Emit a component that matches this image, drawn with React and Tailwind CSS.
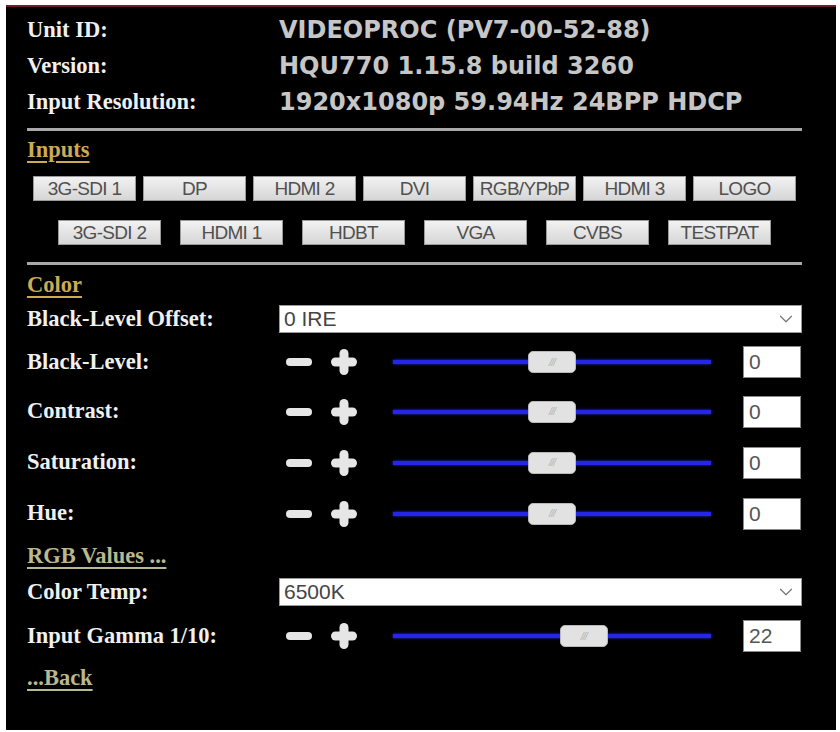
import { ChevronDown } from "lucide-react"

const serif = { fontFamily: '"Liberation Serif", "Times New Roman", serif' }

const info = [
  ["Unit ID:", "VIDEOPROC (PV7-00-52-88)"],
  ["Version:", "HQU770 1.15.8 build 3260"],
  ["Input Resolution:", "1920x1080p 59.94Hz 24BPP HDCP"],
]

const row1 = ["3G-SDI 1", "DP", "HDMI 2", "DVI", "RGB/YPbP", "HDMI 3", "LOGO"]
const row2 = ["3G-SDI 2", "HDMI 1", "HDBT", "VGA", "CVBS", "TESTPAT"]

const InputButton = ({ label }) => (
  <button className="w-[103px] h-[25px] bg-gradient-to-b from-[#f2f2f2] to-[#d6d6d6] border border-[#9a9a9a] text-[#505050] text-[19px] leading-none tracking-[-0.7px] font-['Liberation_Sans',Arial,sans-serif]">
    {label}
  </button>
)

const Label = ({ children }) => (
  <div className="w-[252px] shrink-0 text-[22.5px] font-bold text-[#f0f0f0] leading-none" style={serif}>
    {children}
  </div>
)

const Minus = () => (
  <svg width="28" height="10" viewBox="0 0 28 10">
    <rect x="1" y="1" width="26" height="8" rx="4" fill="#e6e6e6" />
  </svg>
)

const Plus = () => (
  <svg width="28" height="28" viewBox="0 0 28 28">
    <rect x="9.5" y="1" width="9" height="26" rx="4.5" fill="#e6e6e6" />
    <rect x="1" y="9.5" width="26" height="9" rx="4.5" fill="#e6e6e6" />
  </svg>
)

const Slider = ({ pct }) => (
  <div className="relative w-[318px] h-[22px] flex items-center">
    <div className="w-full h-[4px] bg-[#2626e6] shadow-[0_0_3px_#3030ff]" />
    <div
      className="absolute top-0 w-[48px] h-[22px] -translate-x-1/2 rounded-[5px] bg-[#e2e2e2] border border-[#b8b8b8] flex items-center justify-center text-[#b4b4b4] text-[11px] italic tracking-[-1px] font-['Liberation_Sans',sans-serif]"
      style={{ left: `${pct}%` }}
    >
      ///
    </div>
  </div>
)

const SliderRow = ({ label, value, pct, h }) => (
  <div className={`flex items-center ${h}`}>
    <Label>{label}</Label>
    <div className="flex items-center pl-[6px]">
      <Minus />
      <div className="ml-[17px]">
        <Plus />
      </div>
      <div className="ml-[35px]">
        <Slider pct={pct} />
      </div>
      <div className="ml-[32px] w-[58px] h-[32px] bg-white border border-[#8a8a8a] flex items-center pl-[5px] text-[21px] text-[#555] font-['Liberation_Sans',Arial,sans-serif]">
        {value}
      </div>
    </div>
  </div>
)

const Select = ({ value }) => (
  <div className="w-[523px] h-[28px] bg-white border border-[#9a9a9a] flex items-center justify-between pl-[4px] pr-[4px] text-[21px] text-[#444] font-['Liberation_Sans',Arial,sans-serif]">
    <span>{value}</span>
    <ChevronDown size={22} strokeWidth={1.3} color="#777" />
  </div>
)

const LinkRow = ({ children, color, h }) => (
  <div className={`flex items-center ${h}`}>
    <span className={`text-[22.5px] font-bold underline underline-offset-[4px] decoration-[2px] leading-none ${color}`} style={serif}>
      {children}
    </span>
  </div>
)

export default function App() {
  return (
    <div className="w-[840px] h-[732px] bg-white overflow-hidden">
      <div className="ml-[6px] mt-[5px] w-[830px] h-[725px] bg-black border-t-2 border-[#6e1c2c] pl-[21px] pr-[34px] pt-[5px]">
        {info.map(([k, v]) => (
          <div key={k} className="flex items-center h-[36px]">
            <Label>{k}</Label>
            <div className="text-[24px] font-bold text-[#c6c6c6] leading-none font-['DejaVu_Sans',Verdana,sans-serif]">
              {v}
            </div>
          </div>
        ))}
        <div className="mt-[8px] h-[3px] bg-[#a8a8a8]" />
        <div className="mt-[4px]">
          <LinkRow color="text-[#ccab52]" h="h-[30px]">Inputs</LinkRow>
        </div>
        <div className="mt-[11px] flex justify-center gap-[7px]">
          {row1.map((b) => (
            <InputButton key={b} label={b} />
          ))}
        </div>
        <div className="mt-[19px] flex justify-center gap-[19px]">
          {row2.map((b) => (
            <InputButton key={b} label={b} />
          ))}
        </div>
        <div className="mt-[17px] h-[3px] bg-[#a8a8a8]" />
        <div className="mt-[5px]">
          <LinkRow color="text-[#ccab52]" h="h-[30px]">Color</LinkRow>
        </div>
        <div className="flex items-center h-[38px]">
          <Label>Black-Level Offset:</Label>
          <Select value="0 IRE" />
        </div>
        <SliderRow label="Black-Level:" value="0" pct={50} h="h-[48px]" />
        <SliderRow label="Contrast:" value="0" pct={50} h="h-[51px]" />
        <SliderRow label="Saturation:" value="0" pct={50} h="h-[51px]" />
        <SliderRow label="Hue:" value="0" pct={50} h="h-[51px]" />
        <LinkRow color="text-[#b9b88e]" h="h-[34px]">RGB Values ...</LinkRow>
        <div className="flex items-center h-[38px]">
          <Label>Color Temp:</Label>
          <Select value="6500K" />
        </div>
        <SliderRow label="Input Gamma 1/10:" value="22" pct={60} h="h-[50px]" />
        <LinkRow color="text-[#b9b88e]" h="h-[34px]">...Back</LinkRow>
      </div>
    </div>
  )
}
